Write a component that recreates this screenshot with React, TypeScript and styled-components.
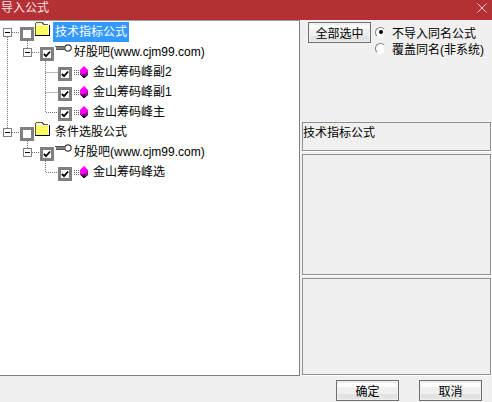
import styled, { createGlobalStyle } from 'styled-components'

const GlobalStyle = createGlobalStyle`
  html, body {
    margin: 0;
    padding: 0;
    background: #f0f0f0;
  }
  * {
    box-sizing: border-box;
  }
`

const Window = styled.div`
  width: 492px;
  height: 402px;
  display: flex;
  flex-direction: column;
  background: #f0f0f0;
  color: #000;
  font-family: "Liberation Sans", "Noto Sans CJK SC", sans-serif;
  font-size: 12px;
  overflow: hidden;
`
const TitleBar = styled.div`
  height: 20px;
  flex: none;
  display: flex;
  align-items: center;
  justify-content: space-between;
  padding: 0 5px 4px 1px;
  background: #b33035;
  color: #f3e4e4;
  line-height: 16px;
`
const Body = styled.div`
  height: 356px;
  flex: none;
  display: flex;
`
const TreePane = styled.div`
  position: relative;
  width: 300px;
  flex: none;
  padding-top: 1px;
  background: #fff;
  border-top: 1px solid #a0a0a0;
  border-right: 1px solid #808080;
  border-bottom: 1px solid #808080;
`
const TreeLines = styled.svg`
  position: absolute;
  left: 0;
  top: -1px;
  width: 120px;
  height: 180px;
  pointer-events: none;
`
const Row = styled.div<{ $indent: number }>`
  height: 20px;
  display: flex;
  align-items: center;
  padding-left: ${p => p.$indent}px;
  position: relative;
`
const Expander = styled.span`
  width: 9px;
  height: 9px;
  flex: none;
  display: flex;
  align-items: center;
  justify-content: center;
  margin-right: 8px;
  background: #fff;
  border: 1px solid #808080;
  &::before {
    content: '';
    width: 5px;
    height: 1px;
    background: #000;
  }
`
const Check = styled.span`
  width: 14px;
  height: 14px;
  flex: none;
  display: flex;
  align-items: center;
  justify-content: center;
  margin-top: 4px;
  background: #fff;
  border: 3px solid #808080;
`
const Label = styled.span<{ $selected?: boolean }>`
  height: 20px;
  line-height: 20px;
  padding: 0 2px;
  white-space: nowrap;
  background: ${p => (p.$selected ? '#3399ff' : 'transparent')};
  color: ${p => (p.$selected ? '#fff' : '#000')};
`
const FolderIcon = styled.svg`
  width: 16px;
  height: 14px;
  flex: none;
  margin: -6px 3px 0 0;
  shape-rendering: crispEdges;
`
const KeyIcon = styled.svg`
  width: 17px;
  height: 8px;
  flex: none;
  margin: -9px 0 0 1px;
`
const GemIcon = styled.svg`
  width: 16px;
  height: 12px;
  flex: none;
  margin: 0 1px 0 2px;
`
const Side = styled.div`
  flex: 1;
  min-width: 0;
  display: flex;
  flex-direction: column;
  padding: 0 1px 0 2px;
`
const Controls = styled.div`
  height: 102px;
  flex: none;
  display: flex;
  align-items: flex-start;
  gap: 4px;
  padding: 2px 0 0 6px;
`
const Button = styled.button`
  width: 63px;
  height: 21px;
  flex: none;
  padding: 0;
  font: inherit;
  color: #000;
  border: 1px solid #707070;
  box-shadow: inset 0 0 0 1px #f0f0f0;
  background: linear-gradient(#f0f0f0 2px, #fff 2px, #fff 6px, #f0f0f0 6px, #f0f0f0 13px, #e3e3e3 13px);
`
const RadioGroup = styled.div`
  display: flex;
  flex-direction: column;
  padding-top: 2px;
`
const RadioRow = styled.label`
  height: 16px;
  display: flex;
  align-items: center;
  gap: 6px;
  white-space: nowrap;
`
const Radio = styled.span<{ $on?: boolean }>`
  width: 11px;
  height: 11px;
  flex: none;
  display: flex;
  align-items: center;
  justify-content: center;
  border-radius: 50%;
  background: #fff;
  border: 1px solid;
  border-color: #808080 #e8e8e8 #fff #808080;
  &::before {
    content: '';
    width: 4px;
    height: 4px;
    border-radius: 50%;
    background: ${p => (p.$on ? '#000' : 'transparent')};
  }
`
const InfoBox = styled.div<{ $height: number }>`
  height: ${p => p.$height}px;
  flex: none;
  margin-bottom: 3px;
  padding-top: 2px;
  line-height: 16px;
  border: 1px solid #909090;
  box-shadow: 1px 1px 0 #fff;
`
const Footer = styled.div`
  height: 26px;
  flex: none;
  display: flex;
  justify-content: flex-end;
  align-items: flex-start;
  gap: 20px;
  padding: 4px 10px 0 0;
`

function Tick() {
  return (
    <svg width="9" height="8" viewBox="0 0 9 8">
      <path d="M1 4 L3.4 6.4 L8 1.2" fill="none" stroke="#000" strokeWidth="2" />
    </svg>
  )
}

function Folder() {
  return (
    <FolderIcon viewBox="0 0 16 14">
      <path d="M2 0 H8 L10 2 H14 V4 H1 V1 Z" fill="#f4f4d8" />
      <path d="M2 0.5 H8 L10 2.5 H14 M1.5 1 V13" stroke="#606030" fill="none" />
      <rect x="2" y="4" width="12" height="9" fill="#fcfc60" />
      <path d="M1 13.5 H16 M15.5 3 V14" stroke="#000" fill="none" />
    </FolderIcon>
  )
}

function Key() {
  return (
    <KeyIcon viewBox="0 0 17 8">
      <circle cx="13" cy="4" r="3.2" fill="#fff" stroke="#404040" strokeWidth="1.2" />
      <path d="M0 2.5 H10 M1 5.5 H10" stroke="#505050" fill="none" />
      <path d="M1 4 H9" stroke="#000" fill="none" />
    </KeyIcon>
  )
}

function Gem() {
  return (
    <GemIcon viewBox="0 0 16 12">
      <path d="M0 4.5 H5 M0 6.5 H5 M0 8.5 H5" stroke="#606060" strokeDasharray="1 1" />
      <path d="M6 4 L10 0 L14 4 V8 L10 12 L6 8 Z" fill="#ff00ff" />
      <path d="M6 8 L10 12 L14 8 V5 L10 8 Z" fill="#a010a0" />
      <path d="M6.5 8.5 L10 12 L14 8.5 M10 8 V12" stroke="#000" fill="none" />
    </GemIcon>
  )
}

function Leaf({ text }: { text: string }) {
  return (
    <Row $indent={58}>
      <Check><Tick /></Check>
      <Gem />
      <Label>{text}</Label>
    </Row>
  )
}

function Root({ text, selected }: { text: string; selected?: boolean }) {
  return (
    <Row $indent={3}>
      <Expander />
      <Check />
      <Folder />
      <Label $selected={selected}>{text}</Label>
    </Row>
  )
}

function Group() {
  return (
    <Row $indent={23}>
      <Expander />
      <Check><Tick /></Check>
      <Key />
      <Label>好股吧(www.cjm99.com)</Label>
    </Row>
  )
}

export default function App() {
  return (
    <Window>
      <GlobalStyle />
      <TitleBar>
        <span>导入公式</span>
        <svg width="10" height="10" viewBox="0 0 10 10">
          <path d="M0.5 0.5 L9.5 9.5 M9.5 0.5 L0.5 9.5" stroke="#e9c9ca" />
        </svg>
      </TitleBar>
      <Body>
        <TreePane>
          <TreeLines viewBox="0 0 120 180">
            <g stroke="#707070" strokeDasharray="1 1" fill="none">
              <path d="M7.5 17 V108.5 M12 12.5 H20 M12 112.5 H20" />
              <path d="M27.5 21 V28 M27.5 121 V128 M32 32.5 H39 M32 132.5 H39" />
              <path d="M45.5 41 V92.5 H58 M45.5 52.5 H58 M45.5 72.5 H58" />
              <path d="M45.5 141 V152.5 H58" />
            </g>
          </TreeLines>
          <Root text="技术指标公式" selected />
          <Group />
          <Leaf text="金山筹码峰副2" />
          <Leaf text="金山筹码峰副1" />
          <Leaf text="金山筹码峰主" />
          <Root text="条件选股公式" />
          <Group />
          <Leaf text="金山筹码峰选" />
        </TreePane>
        <Side>
          <Controls>
            <Button>全部选中</Button>
            <RadioGroup>
              <RadioRow><Radio $on />不导入同名公式</RadioRow>
              <RadioRow><Radio />覆盖同名(非系统)</RadioRow>
            </RadioGroup>
          </Controls>
          <InfoBox $height={29}>技术指标公式</InfoBox>
          <InfoBox $height={121} />
          <InfoBox $height={97} />
        </Side>
      </Body>
      <Footer>
        <Button>确定</Button>
        <Button>取消</Button>
      </Footer>
    </Window>
  )
}
